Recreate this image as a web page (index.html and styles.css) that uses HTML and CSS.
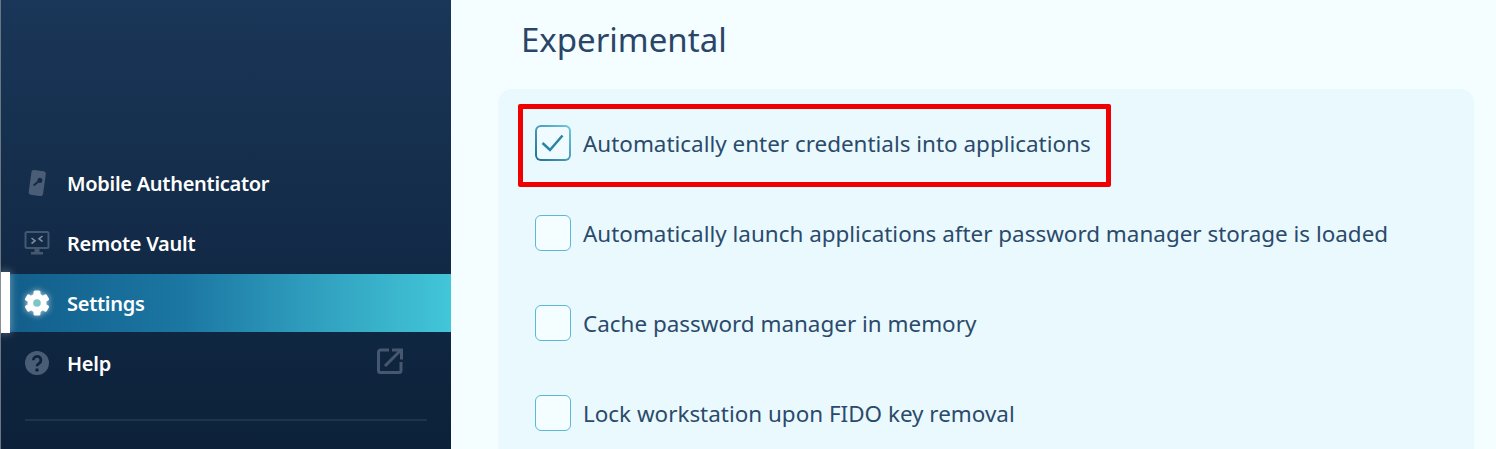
FILE: index.html
```html
<!DOCTYPE html>
<html lang="en">
<head>
    <meta charset="UTF-8">
    <title>Settings</title>
    <link rel="stylesheet" href="styles.css">
</head>
<body>
    <div class="app">
        <nav class="sidebar">
            <a class="nav-item">
                <svg class="nav-icon" viewBox="0 0 26 26"><g transform="rotate(8 13 13)"><rect x="6" y="0.500" width="14.500" height="25" rx="2.500" fill="#4a5d76"/><circle cx="15.500" cy="10" r="2.500" fill="#14294a"/><path d="M15 10.500 L10 16" stroke="#14294a" stroke-width="1.800"/></g></svg>
                <span>Mobile Authenticator</span>
            </a>
            <a class="nav-item">
                <svg class="nav-icon" viewBox="0 0 26 26"><rect x="1.500" y="2" width="23" height="16" rx="1.500" fill="none" stroke="#46586f" stroke-width="2"/><path d="M7.500 8 L11 10.800 L7.500 13.500 M18.500 6 L15 8.800 L18.500 11.500" fill="none" stroke="#7d8b9c" stroke-width="1.600"/><path d="M10.500 19 H15.500 V22 H19 V24.500 H7 V22 H10.500 Z" fill="#46586f"/></svg>
                <span>Remote Vault</span>
            </a>
            <a class="nav-item active">
                <svg class="nav-icon gear" viewBox="0 0 26 26">
                    <circle cx="13" cy="13" r="9.500" fill="#fff"/>
                    <rect x="9.500" y="0.500" width="7" height="25" rx="1.500" fill="#fff"/>
                    <rect x="9.500" y="0.500" width="7" height="25" rx="1.500" fill="#fff" transform="rotate(60 13 13)"/>
                    <rect x="9.500" y="0.500" width="7" height="25" rx="1.500" fill="#fff" transform="rotate(120 13 13)"/>
                    <circle cx="13" cy="13" r="3.800" fill="#7fc4c8"/>
                </svg>
                <span>Settings</span>
            </a>
            <a class="nav-item">
                <svg class="nav-icon" viewBox="0 0 26 26"><circle cx="13" cy="13" r="12" fill="#4a5d76"/><path d="M9.300 10.200a3.800 3.800 0 1 1 5.800 3.200c-1.300.8-2.100 1.400-2.100 2.900" fill="none" stroke="#0d2440" stroke-width="2.800"/><circle cx="13" cy="20" r="1.800" fill="#0d2440"/></svg>
                <span>Help</span>
                <svg class="ext-icon" viewBox="0 0 26 26"><path d="M12 2H3.500a2 2 0 0 0-2 2v18.500a2 2 0 0 0 2 2H22a2 2 0 0 0 2-2V14" fill="none" stroke="#46586f" stroke-width="3"/><path d="M8 18 L23 3 M15 2 H24.500 V11.500" fill="none" stroke="#46586f" stroke-width="3"/></svg>
            </a>
            <div class="divider"></div>
        </nav>
        <main class="content">
            <h1>Experimental</h1>
            <section class="panel">
                <label class="option highlighted">
                    <span class="box checked">
                        <svg viewBox="0 0 36 36"><path d="M7.500 18 L15 25 L27.500 10.500" fill="none" stroke="#2a84a3" stroke-width="2.500"/></svg>
                    </span>
                    Automatically enter credentials into applications
                </label>
                <label class="option"><span class="box"></span>Automatically launch applications after password manager storage is loaded</label>
                <label class="option"><span class="box"></span>Cache password manager in memory</label>
                <label class="option"><span class="box"></span>Lock workstation upon FIDO key removal</label>
            </section>
        </main>
    </div>
</body>
</html>
```

FILE: styles.css
```css
html, body {
    margin: 0;
    height: 449px;
    overflow: hidden;
}
body {
    font-family: "Noto Sans", "Open Sans", sans-serif;
}
.app {
    display: flex;
    height: 449px;
    overflow: hidden;
}
.sidebar {
    width: 451px;
    flex-shrink: 0;
    box-sizing: border-box;
    padding-top: 153px;
    background: linear-gradient(#1a3658, #0c2139 100%);
    border-left: 1px solid #6b7683;
}
.nav-item {
    display: flex;
    align-items: center;
    height: 60px;
    padding-left: 23px;
    color: #fff;
    font-size: 20px;
    font-weight: 600;
    letter-spacing: -0.28px;
}
.nav-item.active {
    position: relative;
    height: 58px;
    margin: 1px 0;
    background: linear-gradient(90deg, #125d8a 0%, #1b76a2 40%, #2f9dbd 68%, #42c6d8 100%);
}
/* white marker sticks out a little above the row */
.nav-item.active::before {
    content: "";
    position: absolute;
    top: -2px;
    bottom: -1px;
    left: 0;
    width: 9px;
    background: #fff;
    box-shadow: 0 0 8px rgba(255, 255, 255, 0.45);
}
.nav-icon {
    width: 26px;
    height: 26px;
    margin-right: 17px;
    flex-shrink: 0;
}
.gear {
    filter: drop-shadow(0 0 3px rgba(255, 255, 255, 0.7));
}
.ext-icon {
    width: 26px;
    height: 26px;
    margin-left: auto;
    margin-right: 48px;
    margin-top: -5px;
}
.divider {
    height: 2px;
    margin: 26px 24px 0;
    background: #1c3450;
}
.content {
    flex: 1;
    min-width: 0;
    padding: 0 22px 0 47px;
    background: #f4fdff;
}
h1 {
    margin: 0;
    height: 89px;
    padding-left: 23px;
    color: #2a4566;
    font-size: 33px;
    font-weight: 400;
    line-height: 79px;
}
.panel {
    box-sizing: border-box;
    height: 360px;
    padding: 9px 37px;
    background: #eaf9fe;
    border-radius: 14px 14px 0 0;
}
.option {
    display: flex;
    align-items: center;
    gap: 12px;
    width: fit-content;
    height: 90px;
    color: #2b4a6b;
    font-size: 22.45px;
}
.option.highlighted {
    position: relative;
}
.option.highlighted::after {
    content: "";
    position: absolute;
    top: 6px;
    bottom: 1px;
    left: -17px;
    right: -20px;
    border: 5px solid #f00000;
    border-radius: 2px;
}
.box {
    box-sizing: border-box;
    width: 36px;
    height: 36px;
    flex-shrink: 0;
    background: #f4fdff;
    border: 1.5px solid #5db8d6;
    border-radius: 6px;
}
.box.checked {
    border: 2px solid transparent;
    background: linear-gradient(#f0fbff, #f0fbff) padding-box, linear-gradient(45deg, #1f6f94, #6fc9dc) border-box;
}
.box svg {
    display: block;
    width: 36px;
    height: 36px;
    margin: -2px;
}
```
